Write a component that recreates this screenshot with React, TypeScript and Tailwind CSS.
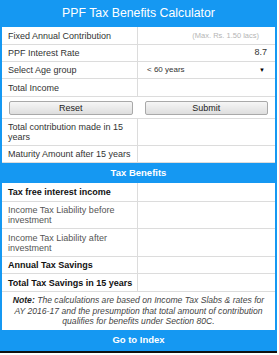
import type { ReactNode } from "react";

const font = { fontFamily: '"Liberation Sans", Arial, sans-serif' };

function Row({
  label,
  children,
  h,
  bold,
  muted,
}: {
  label: ReactNode;
  children?: ReactNode;
  h: string;
  bold?: boolean;
  muted?: boolean;
}) {
  return (
    <div className={`flex border-b border-[#dcdcdc] ${h}`}>
      <div
        className={`flex w-[136px] shrink-0 items-center border-r border-[#dcdcdc] pl-[6px] pr-[1px] text-[9px] leading-[10px] ${
          bold ? "font-bold text-[#111]" : muted ? "text-[#555]" : "text-[#333]"
        }`}
      >
        <span>{label}</span>
      </div>
      <div className="flex flex-1 items-center px-[8px] text-[9px] text-[#333]">{children}</div>
    </div>
  );
}

function Band({ children, h }: { children: ReactNode; h: string }) {
  return (
    <div className={`flex items-center justify-center bg-[#1598f2] text-[9.5px] font-bold text-white ${h}`}>
      {children}
    </div>
  );
}

export default function App() {
  return (
    <div className="h-[355px] w-[279px] bg-white" style={font}>
      <div className="w-[277px] border-x-2 border-[#1598f2] bg-white">
        <div className="-mx-[2px] flex h-[27px] items-center justify-center bg-[#1598f2] text-[12.3px] text-white">
          PPF Tax Benefits Calculator
        </div>
        <Row label="Fixed Annual Contribution" h="h-[18px]">
          <span className="ml-auto mr-[8px] text-[7.5px] text-[#b5b5b5]">(Max. Rs. 1.50 lacs)</span>
        </Row>
        <Row label="PPF Interest Rate" h="h-[17px]">
          <span className="ml-auto">8.7</span>
        </Row>
        <Row label="Select Age group" h="h-[17px]">
          <span className="ml-[1px] text-[8px]">&lt; 60 years</span>
          <span className="ml-auto mr-[2px] text-[6px] text-black">▼</span>
        </Row>
        <Row label="Total Income" h="h-[18px]" />
        <div className="flex h-[22px] items-center gap-[12px] border-b border-[#dcdcdc] px-[7px]">
          {["Reset", "Submit"].map((b) => (
            <button
              key={b}
              className="h-[14px] flex-1 rounded-[2px] border border-[#a9a9a9] bg-gradient-to-b from-[#f6f6f6] to-[#dedede] text-[9px] leading-[12px] text-[#222]"
            >
              {b}
            </button>
          ))}
        </div>
        <Row label="Total contribution made in 15 years" h="h-[27px]" />
        <Row label="Maturity Amount after 15 years" h="h-[17px]" />
        <Band h="h-[20px]">Tax Benefits</Band>
        <Row label="Tax free interest income" h="h-[19px]" bold />
        <Row label="Income Tax Liability before investment" h="h-[27px]" muted />
        <Row label="Income Tax Liability after investment" h="h-[28px]" muted />
        <Row label="Annual Tax Savings" h="h-[17px]" bold />
        <Row label="Total Tax Savings in 15 years" h="h-[18px]" bold />
        <div className="flex h-[38px] items-center justify-center px-[6px] text-center text-[8.6px] italic leading-[10.5px] text-[#444]">
          <p>
            <b className="text-[#222]">Note:</b> The calculations are based on Income Tax Slabs &amp; rates for AY
            2016-17 and the presumption that total amount of contribution qualifies for benefits under Section 80C.
          </p>
        </div>
      </div>
      <div className="w-[277px]">
        <Band h="h-[21px]">Go to Index</Band>
        <div className="h-[2px] bg-[#111]" />
      </div>
    </div>
  );
}
